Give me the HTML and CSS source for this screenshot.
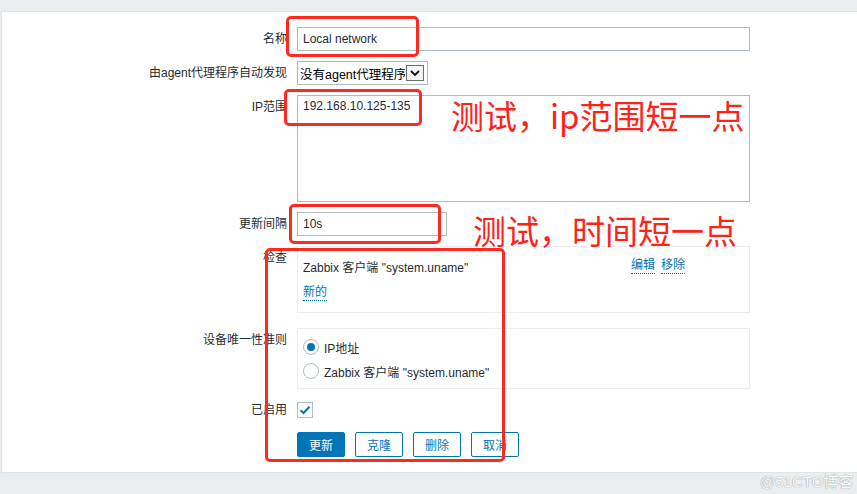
FILE: index.html
```html
<!DOCTYPE html>
<html lang="zh">
<head>
<meta charset="utf-8">
<link rel="stylesheet" href="styles.css">
</head>
<body>
<div class="page">
  <div class="panel">
    <div class="row">
      <div class="label">名称</div>
      <div class="field"><div class="input w-full">Local network</div></div>
    </div>
    <div class="row">
      <div class="label">由agent代理程序自动发现</div>
      <div class="field">
        <div class="select">
          <span class="select-text">没有agent代理程序</span>
          <span class="select-arrow">
            <svg width="12" height="8" viewBox="0 0 12 8"><path d="M2 2 L6 6 L10 2" fill="none" stroke="#111" stroke-width="1.8"/></svg>
          </span>
        </div>
      </div>
    </div>
    <div class="row">
      <div class="label">IP范围</div>
      <div class="field"><div class="textarea w-full">192.168.10.125-135</div></div>
    </div>
    <div class="row">
      <div class="label">更新间隔</div>
      <div class="field"><div class="input w-short">10s</div></div>
    </div>
    <div class="row row-checks">
      <div class="label">检查</div>
      <div class="field">
        <div class="box checks">
          <div class="check-line">
            <span class="check-name">Zabbix 客户端 "system.uname"</span>
            <span class="check-actions"><a class="link">编辑</a><a class="link">移除</a></span>
          </div>
          <div class="check-line"><a class="link">新的</a></div>
        </div>
      </div>
    </div>
    <div class="row row-unique">
      <div class="label">设备唯一性准则</div>
      <div class="field">
        <div class="box unique">
          <div class="radio-line"><span class="radio on"></span><span>IP地址</span></div>
          <div class="radio-line"><span class="radio"></span><span>Zabbix 客户端 "system.uname"</span></div>
        </div>
      </div>
    </div>
    <div class="row row-enabled">
      <div class="label">已启用</div>
      <div class="field field-center">
        <span class="checkbox">
          <svg width="12" height="10" viewBox="0 0 12 10"><path d="M1.5 5.2 L4.6 8 L10.5 1.8" fill="none" stroke="#0275b8" stroke-width="2"/></svg>
        </span>
      </div>
    </div>
    <div class="row row-buttons">
      <div class="label"></div>
      <div class="field buttons">
        <span class="btn primary">更新</span>
        <span class="btn">克隆</span>
        <span class="btn">删除</span>
        <span class="btn">取消</span>
      </div>
    </div>
  </div>

  <div class="mark mark1"></div>
  <div class="mark mark2"></div>
  <div class="mark mark3"></div>
  <div class="mark mark4"></div>
  <div class="note note1">测试，ip范围短一点</div>
  <div class="note note2">测试，时间短一点</div>
  <div class="watermark">@51CTO博客</div>
</div>
</body>
</html>
```

FILE: styles.css
```css
* { box-sizing: border-box; }
html, body {
  margin: 0;
  padding: 0;
}
body {
  background: #ebeef0;
  font-family: "Liberation Sans", Arial, "Noto Sans CJK SC", sans-serif;
  font-size: 12px;
  color: #1f2c33;
  width: 857px;
  height: 494px;
  overflow: hidden;
}
.page {
  position: relative;
  width: 857px;
  height: 494px;
  padding: 11px 0 0 1px;
}
.panel {
  background: #fff;
  border: 1px solid #dfe4e7;
  border-right: none;
  padding: 15px 0 14px 0;
  height: 462px;
}
.row {
  display: grid;
  grid-template-columns: 285px 1fr;
  column-gap: 10px;
  margin-bottom: 10px;
}
.row-checks { margin-bottom: 15px; }
.row-unique { margin-bottom: 9px; }
.row-buttons { margin-bottom: 0; }
.label {
  text-align: right;
  line-height: 24px;
  white-space: nowrap;
}
.field { display: flex; align-items: flex-start; }
.field-center { align-items: center; height: 24px; }

.input, .textarea {
  border: 1px solid #acbbc4;
  background: #fff;
  padding: 0 5px;
  line-height: 22px;
  height: 24px;
  white-space: nowrap;
}
.w-full { width: 453px; }
.w-short { width: 150px; }
.textarea {
  height: 107px;
  line-height: 16px;
  padding-top: 2px;
}

.select {
  width: 131px;
  height: 24px;
  border: 1px solid #acbbc4;
  display: flex;
  align-items: center;
  padding-left: 2px;
  font-size: 12.5px;
  color: #000;
}
.select-text { flex: 1; white-space: nowrap; overflow: hidden; }
.select-arrow {
  flex: none;
  width: 18px;
  height: 16px;
  border: 1px solid #6d6d6d;
  background: #f4f4f4;
  display: flex;
  align-items: center;
  justify-content: center;
  margin-right: 3px;
  margin-left: 1px;
}

.box {
  width: 453px;
  border: 1px solid #ebeef0;
  padding: 0 5px;
}
.checks {
  height: 67px;
  padding-top: 9px;
}
.check-line {
  display: flex;
  align-items: center;
  height: 20px;
  margin-bottom: 7px;
}
.check-name { width: 328px; }
.check-actions { display: flex; gap: 6px; }
.link {
  color: #0275b8;
  border-bottom: 1px dotted #0275b8;
  line-height: 15px;
  text-decoration: none;
}

.unique {
  height: 61px;
  padding-top: 6px;
}
.radio-line {
  display: flex;
  align-items: center;
  height: 24px;
  gap: 5px;
}
.radio {
  width: 16px;
  height: 16px;
  border: 1px solid #acbbc4;
  border-radius: 50%;
  background: #fff;
  display: flex;
  align-items: center;
  justify-content: center;
}
.radio.on::after {
  content: "";
  width: 8px;
  height: 8px;
  border-radius: 50%;
  background: #0275b8;
}

.checkbox {
  width: 16px;
  height: 16px;
  border: 1px solid #acbbc4;
  display: flex;
  align-items: center;
  justify-content: center;
  background: #fff;
}

.buttons { gap: 10px; }
.btn {
  width: 48px;
  height: 25px;
  border: 1px solid #0275b8;
  border-radius: 2px;
  color: #0275b8;
  background: #fff;
  display: flex;
  align-items: center;
  justify-content: center;
}
.btn.primary {
  background: #0275b8;
  color: #fff;
}

.mark {
  position: absolute;
  border: 3px solid #ff2a1f;
  border-radius: 5px;
}
.mark1 { left: 286px; top: 16px; width: 133px; height: 41px; }
.mark2 { left: 284px; top: 89px; width: 138px; height: 37px; }
.mark3 { left: 289px; top: 204px; width: 152px; height: 40px; }
.mark4 { left: 265px; top: 248px; width: 240px; height: 214px; }

.note {
  position: absolute;
  color: #ff2217;
  font-family: "Noto Sans CJK SC", "Noto Sans", sans-serif;
  font-size: 33px;
  line-height: 33px;
  white-space: nowrap;
}
.note1 { left: 451px; top: 99px; }
.note2 { left: 473px; top: 214px; }

.watermark {
  position: absolute;
  left: 760px;
  top: 470px;
  font-family: "Liberation Sans", "Noto Sans CJK SC", sans-serif;
  font-size: 15px;
  color: #fbfbfb;
  text-shadow: 0 0 1px #98a1a6, 0 0 1px #98a1a6;
  white-space: nowrap;
}
```
